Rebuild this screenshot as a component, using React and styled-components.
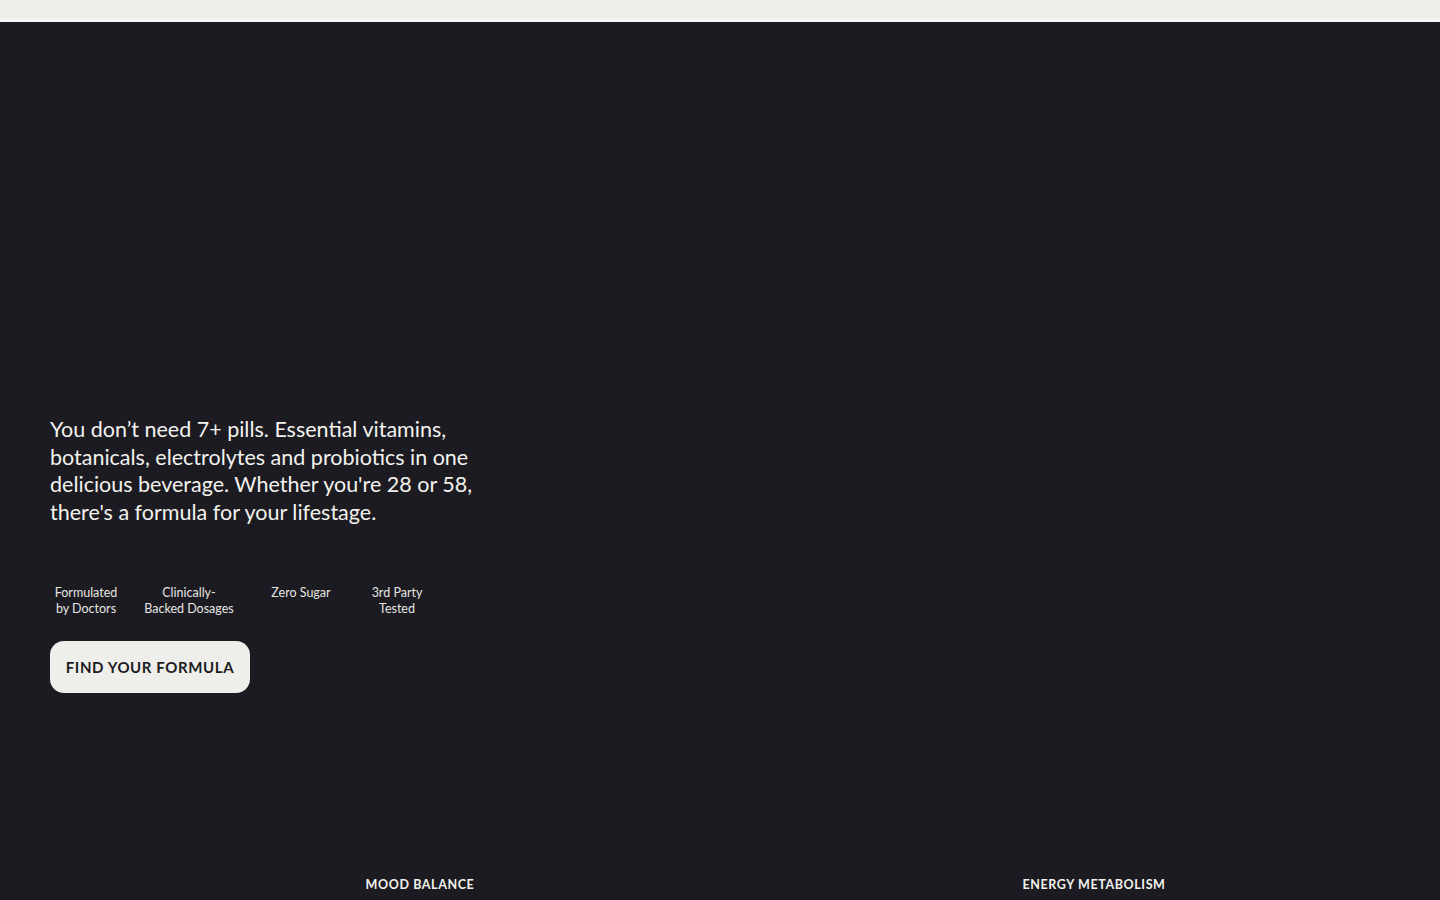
import React from 'react'
import styled, { createGlobalStyle } from 'styled-components'

const GlobalStyle = createGlobalStyle`
  html, body {
    margin: 0;
    padding: 0;
    background: #1c1b21;
  }
  body {
    font-family: Lato, "Noto Sans", sans-serif;
    -webkit-font-smoothing: antialiased;
  }
`

const Page = styled.div`
  min-height: 900px;
  background: #1c1b21;
  color: #f2f2ee;
  overflow: hidden;
`

const TopBar = styled.div`
  height: 18px;
  background: #eceee8;
  border-bottom: 4px solid #f4f4f1;
`

const Hero = styled.section`
  padding: 394px 50px 0;
  display: flex;
  flex-direction: column;
  align-items: flex-start;
`

const Lead = styled.p`
  margin: 0;
  width: 430px;
  font-size: 21.5px;
  line-height: 27.5px;
  font-weight: 400;
  color: #f2f2ee;
`

const Features = styled.ul`
  list-style: none;
  margin: 59px 0 0;
  padding: 0;
  display: grid;
  grid-template-columns: 72px 110px 90px 78px;
  column-gap: 12px;
`

const Feature = styled.li`
  text-align: center;
  font-size: 12.5px;
  line-height: 16px;
  color: #e6e6e1;
`

const Cta = styled.button`
  margin-top: 24px;
  width: 200px;
  height: 52px;
  border: none;
  border-radius: 14px;
  background: #eeefeb;
  color: #1c1b21;
  font-family: Lato, "Noto Sans", sans-serif;
  font-size: 15px;
  font-weight: 700;
  letter-spacing: 0.6px;
  cursor: pointer;
`

const Benefits = styled.div`
  margin-top: 184px;
  padding-left: 83px;
  display: grid;
  grid-template-columns: 674px 674px;
`

const Benefit = styled.div`
  text-align: center;
  font-size: 12.5px;
  font-weight: 700;
  letter-spacing: 0.6px;
  color: #f2f2ee;
`

const features = [
  ['Formulated', 'by Doctors'],
  ['Clinically-', 'Backed Dosages'],
  ['Zero Sugar'],
  ['3rd Party', 'Tested'],
]

const App = () => (
  <Page>
    <GlobalStyle />
    <TopBar />
    <Hero>
      <Lead>
        You don’t need 7+ pills. Essential vitamins, botanicals, electrolytes
        and probiotics in one delicious beverage. Whether you're 28 or 58,
        there's a formula for your lifestage.
      </Lead>
      <Features>
        {features.map((lines, key) => (
          <Feature key={key}>
            {lines.map((line, i) => (
              <div key={i}>{line}</div>
            ))}
          </Feature>
        ))}
      </Features>
      <Cta>FIND YOUR FORMULA</Cta>
    </Hero>
    <Benefits>
      <Benefit>MOOD BALANCE</Benefit>
      <Benefit>ENERGY METABOLISM</Benefit>
    </Benefits>
  </Page>
)

export default App
